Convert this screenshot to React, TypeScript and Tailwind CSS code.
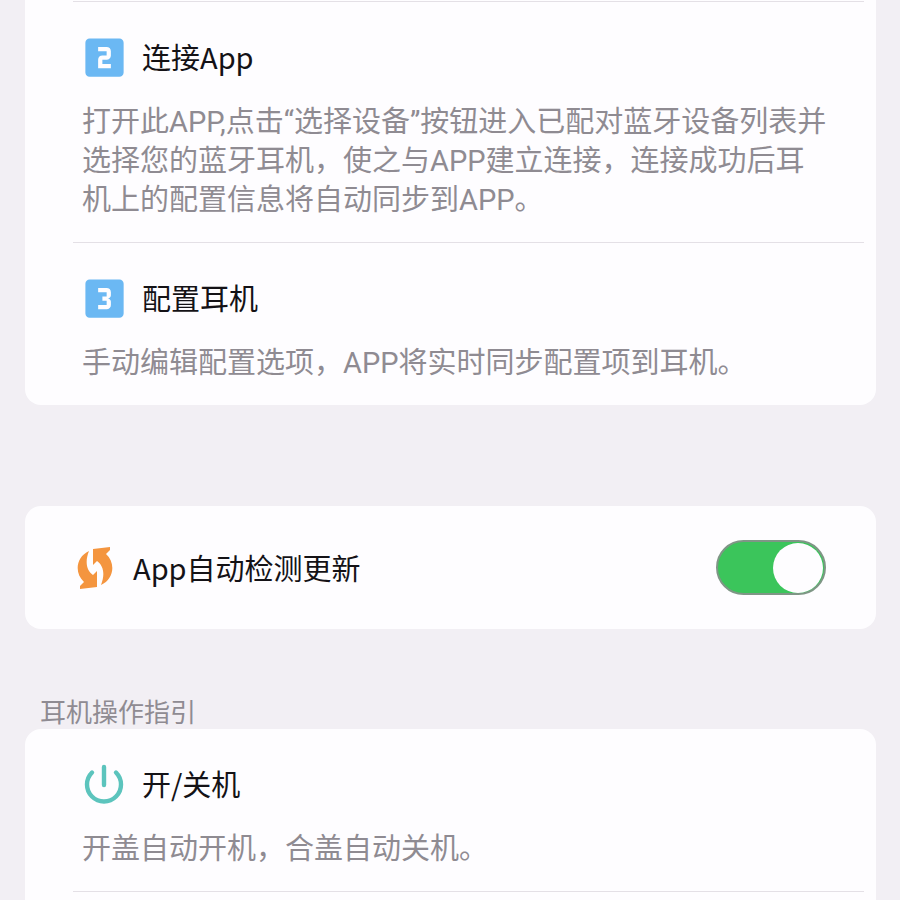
import React, { useState } from 'react';
import { MdLooks3, MdLooksTwo } from 'react-icons/md';

const PowerIcon = () => (
    <svg viewBox="0 0 38 38" className="w-[38px] h-[38px] overflow-visible" fill="none" stroke="#5cc4bd" strokeWidth="4.4" strokeLinecap="round">
        <path d="M7 7.5a17 17 0 1 0 24 0" />
        <path d="M19 2v18" />
    </svg>
);

const UpdateIcon = () => (
    <svg viewBox="0 0 36 42" className="w-9 h-[42px] shrink-0" fill="#f4953f">
        <path d="M12 4C-1 10-3 26 7 35L3 39V42L20 40V24L16 28C9 23 8 14 12 4Z" />
        <path d="M24 38C37 32 39 16 29 7L33 3V0L16 2V18L20 14C27 19 28 28 24 38Z" />
    </svg>
);

const setupSteps = [
    {
        icon: <MdLooksTwo className="w-[51px] h-[51px] shrink-0 text-[#6bb8f3]" />,
        title: '连接App',
        desc: '打开此APP,点击“选择设备”按钮进入已配对蓝牙设备列表并选择您的蓝牙耳机，使之与APP建立连接，连接成功后耳机上的配置信息将自动同步到APP。'
    },
    {
        icon: <MdLooks3 className="w-[51px] h-[51px] shrink-0 text-[#6bb8f3]" />,
        title: '配置耳机',
        desc: '手动编辑配置选项，APP将实时同步配置项到耳机。'
    }
];

const guides = [
    {
        icon: <PowerIcon />,
        title: '开/关机',
        desc: '开盖自动开机，合盖自动关机。'
    }
];

interface GuideItemProps {
    icon: React.ReactNode;
    title: string;
    desc: string;
}

const GuideItem: React.FC<GuideItemProps> = ({ icon, title, desc }) => (
    <div className="pt-9 pb-[22px] pl-[57px] pr-11">
        <div className="flex items-center h-[38px] pl-[3px] gap-[19px]">
            <div className="flex items-center justify-center w-[38px] h-[38px] shrink-0">{icon}</div>
            <h3 className="text-[29px] leading-[36px] pb-0.5 text-[#141216]">{title}</h3>
        </div>
        <p className="mt-[27px] text-[29px] leading-[39px] text-[#8f8b92] font-['Roboto','Noto_Sans_CJK_SC',sans-serif]">
            {desc}
        </p>
    </div>
);

const Divider = () => <hr className="ml-12 mr-3 border-t border-[#e4e0e6]" />;

const App: React.FC = () => {
    const [autoUpdate, setAutoUpdate] = useState(true);

    return (
        <main
            lang="zh-CN"
            className="min-h-screen flex flex-col pl-[25px] pr-6 bg-[#f2eff4] font-['Noto_Sans_CJK_SC',sans-serif]"
        >
            {/* SETUP STEPS */}
            <section className="pt-px bg-[#fefdff] rounded-b-2xl">
                {setupSteps.map((step) => (
                    <React.Fragment key={step.title}>
                        <Divider />
                        <GuideItem {...step} />
                    </React.Fragment>
                ))}
            </section>

            {/* AUTO UPDATE */}
            <section className="mt-[101px] h-[123px] flex items-center pl-[52px] pr-[50px] bg-[#fefdff] rounded-2xl">
                <UpdateIcon />
                <label htmlFor="auto-update" className="ml-5 pb-0.5 flex-1 text-[29px] leading-[36px] text-[#141216]">
                    App自动检测更新
                </label>
                <input
                    id="auto-update"
                    type="checkbox"
                    role="switch"
                    checked={autoUpdate}
                    onChange={(e) => setAutoUpdate(e.target.checked)}
                    className="appearance-none flex items-center w-[110px] h-[55px] p-px rounded-full border-2 border-[#7f9686] bg-gray-200 checked:bg-[#3bc55b] before:block before:w-[50px] before:h-[50px] before:rounded-full before:bg-[#fefdff] checked:before:ml-auto cursor-pointer"
                />
            </section>

            {/* EARPHONE GUIDE */}
            <h2 className="mt-[66px] pl-[15px] pb-0.5 text-[26px] leading-[32px] text-[#8f8b92]">耳机操作指引</h2>
            <section className="flex-1 bg-[#fefdff] rounded-t-2xl">
                {guides.map((guide) => (
                    <React.Fragment key={guide.title}>
                        <GuideItem {...guide} />
                        <Divider />
                    </React.Fragment>
                ))}
            </section>
        </main>
    );
};

export default App;
